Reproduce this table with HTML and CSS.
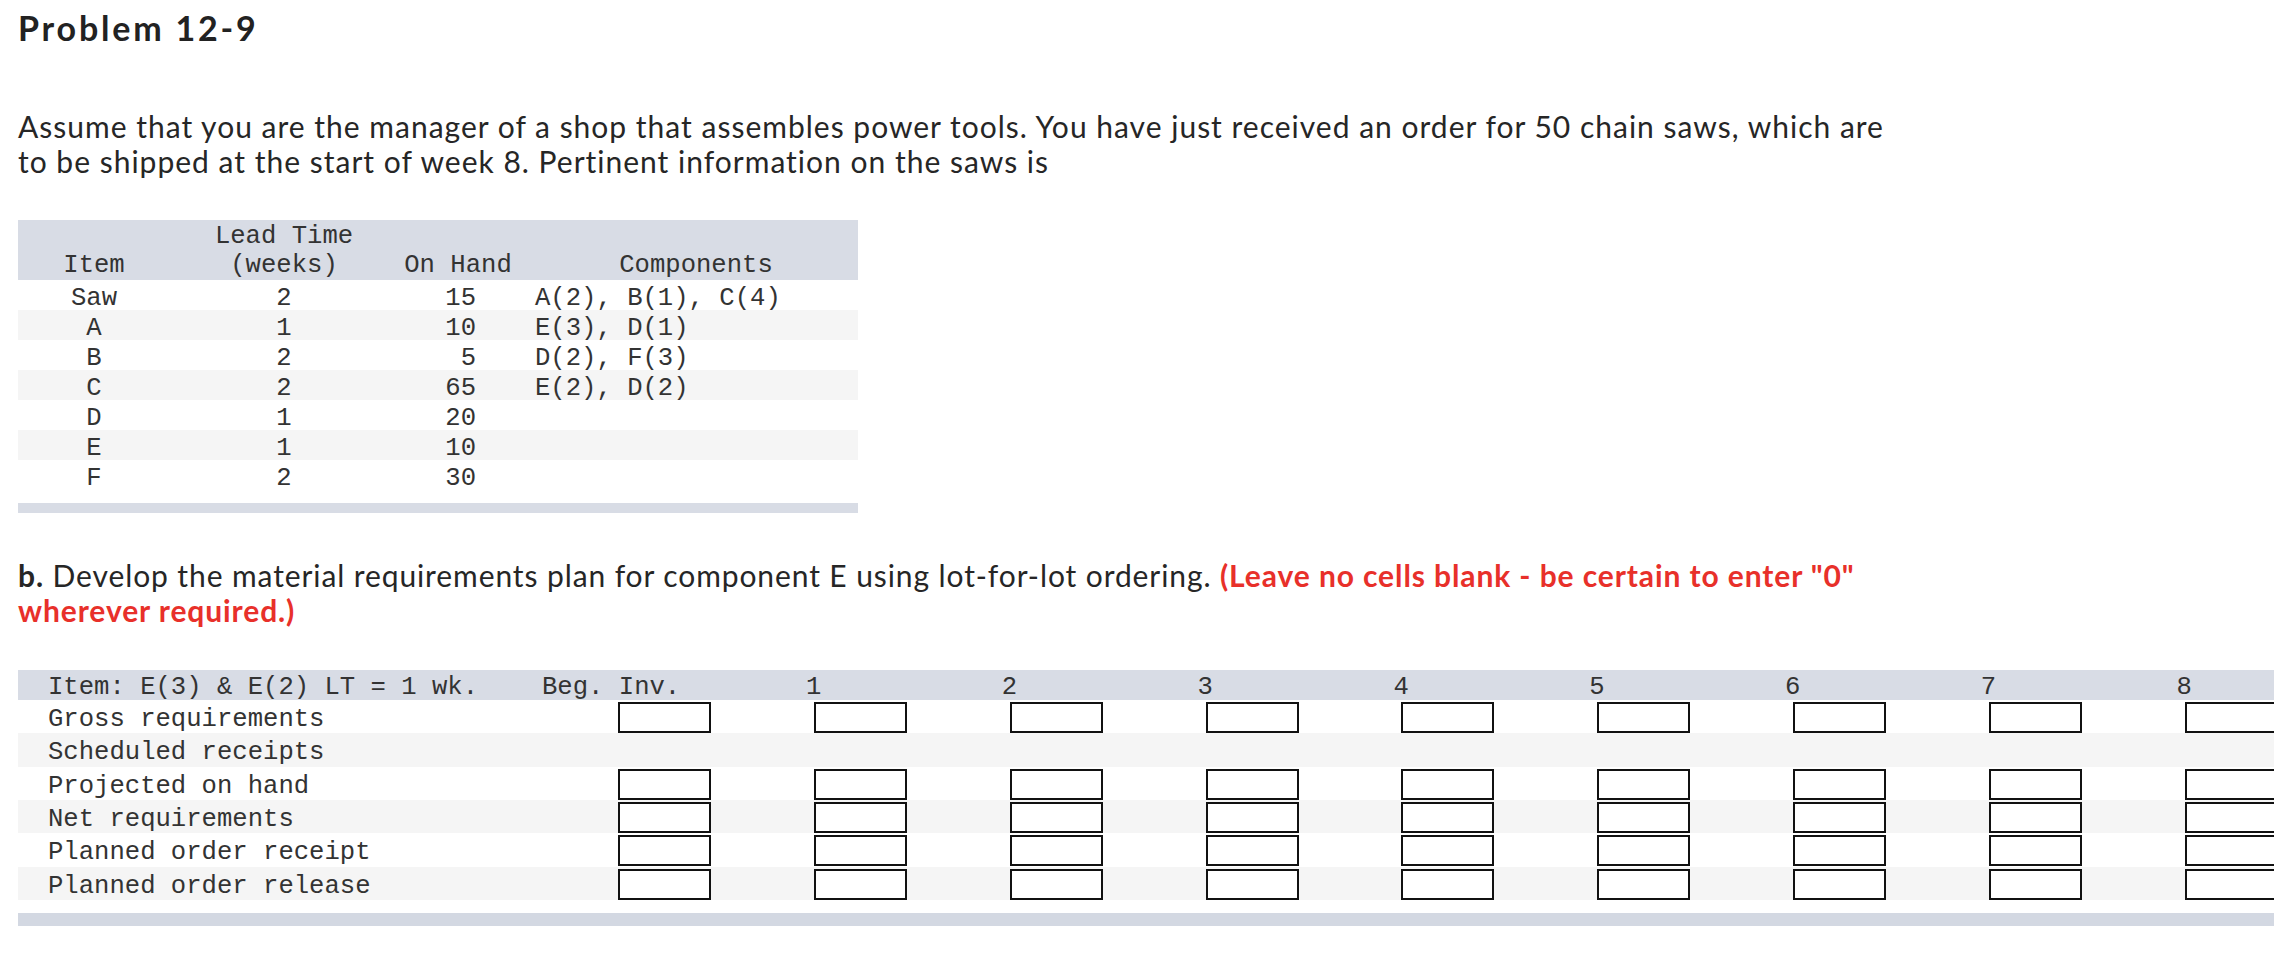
FILE: index.html
```html
<!DOCTYPE html>
<html lang="en">
<head>
<meta charset="utf-8">
<title>Problem 12-9</title>
<link rel="stylesheet" href="styles.css">
</head>
<body>
<div class="page">
  <h1 class="title">Problem 12-9</h1>
  <p class="intro">Assume that you are the manager of a shop that assembles power tools. You have just received an order for 50 chain saws, which are<br>to be shipped at the start of week 8. Pertinent information on the saws is</p>

  <div class="bom">
    <table class="bom-table">
      <colgroup>
        <col class="c-item"><col class="c-lead"><col class="c-hand"><col class="c-comp">
      </colgroup>
      <thead>
        <tr>
          <th class="mid">Item</th>
          <th class="mid">Lead Time<br>(weeks)</th>
          <th class="mid">On Hand</th>
          <th class="mid comp-h">Components</th>
        </tr>
      </thead>
      <tbody>
        <tr><td class="mid">Saw</td><td class="mid">2</td><td class="num">15</td><td class="comp">A(2), B(1), C(4)</td></tr>
        <tr class="alt"><td class="mid">A</td><td class="mid">1</td><td class="num">10</td><td class="comp">E(3), D(1)</td></tr>
        <tr><td class="mid">B</td><td class="mid">2</td><td class="num">5</td><td class="comp">D(2), F(3)</td></tr>
        <tr class="alt"><td class="mid">C</td><td class="mid">2</td><td class="num">65</td><td class="comp">E(2), D(2)</td></tr>
        <tr><td class="mid">D</td><td class="mid">1</td><td class="num">20</td><td class="comp"></td></tr>
        <tr class="alt"><td class="mid">E</td><td class="mid">1</td><td class="num">10</td><td class="comp"></td></tr>
        <tr><td class="mid">F</td><td class="mid">2</td><td class="num">30</td><td class="comp"></td></tr>
      </tbody>
    </table>
    <div class="bar"></div>
  </div>

  <p class="task"><b>b.</b> Develop the material requirements plan for component E using lot-for-lot ordering. <strong class="warn">(Leave no cells blank - be certain to enter "0"<br>wherever required.)</strong></p>

  <div class="mrp">
    <div class="mrp-row mrp-head">
      <div class="lbl">Item: E(3) &amp; E(2) LT = 1 wk.</div>
      <div class="beg-h">Beg. Inv.</div>
      <div class="wk">1</div><div class="wk">2</div><div class="wk">3</div><div class="wk">4</div>
      <div class="wk">5</div><div class="wk">6</div><div class="wk">7</div><div class="wk">8</div>
    </div>
    <div class="mrp-row">
      <div class="lbl">Gross requirements</div>
      <div class="cell beg"><span class="box"></span></div>
      <div class="cell"><span class="box"></span></div><div class="cell"><span class="box"></span></div>
      <div class="cell"><span class="box"></span></div><div class="cell"><span class="box"></span></div>
      <div class="cell"><span class="box"></span></div><div class="cell"><span class="box"></span></div>
      <div class="cell"><span class="box"></span></div><div class="cell"><span class="box"></span></div>
    </div>
    <div class="mrp-row alt">
      <div class="lbl">Scheduled receipts</div>
    </div>
    <div class="mrp-row">
      <div class="lbl">Projected on hand</div>
      <div class="cell beg"><span class="box"></span></div>
      <div class="cell"><span class="box"></span></div><div class="cell"><span class="box"></span></div>
      <div class="cell"><span class="box"></span></div><div class="cell"><span class="box"></span></div>
      <div class="cell"><span class="box"></span></div><div class="cell"><span class="box"></span></div>
      <div class="cell"><span class="box"></span></div><div class="cell"><span class="box"></span></div>
    </div>
    <div class="mrp-row alt">
      <div class="lbl">Net requirements</div>
      <div class="cell beg"><span class="box"></span></div>
      <div class="cell"><span class="box"></span></div><div class="cell"><span class="box"></span></div>
      <div class="cell"><span class="box"></span></div><div class="cell"><span class="box"></span></div>
      <div class="cell"><span class="box"></span></div><div class="cell"><span class="box"></span></div>
      <div class="cell"><span class="box"></span></div><div class="cell"><span class="box"></span></div>
    </div>
    <div class="mrp-row">
      <div class="lbl">Planned order receipt</div>
      <div class="cell beg"><span class="box"></span></div>
      <div class="cell"><span class="box"></span></div><div class="cell"><span class="box"></span></div>
      <div class="cell"><span class="box"></span></div><div class="cell"><span class="box"></span></div>
      <div class="cell"><span class="box"></span></div><div class="cell"><span class="box"></span></div>
      <div class="cell"><span class="box"></span></div><div class="cell"><span class="box"></span></div>
    </div>
    <div class="mrp-row alt">
      <div class="lbl">Planned order release</div>
      <div class="cell beg"><span class="box"></span></div>
      <div class="cell"><span class="box"></span></div><div class="cell"><span class="box"></span></div>
      <div class="cell"><span class="box"></span></div><div class="cell"><span class="box"></span></div>
      <div class="cell"><span class="box"></span></div><div class="cell"><span class="box"></span></div>
      <div class="cell"><span class="box"></span></div><div class="cell"><span class="box"></span></div>
    </div>
    <div class="bar mrp-bar"></div>
  </div>
</div>
</body>
</html>
```
FILE: styles.css
```css
html, body {
  background: #ffffff;
}

body {
  margin: 8px;
  font-family: Lato, "Liberation Sans", Arial, sans-serif;
  color: #222222;
}

.page {
  padding-left: 10px;
}

.title {
  margin: 0;
  font-size: 34px;
  font-weight: 700;
  line-height: 40px;
  letter-spacing: 2.8px;
  color: #222222;
}

.intro {
  margin: 61px 0 0;
  font-size: 30px;
  line-height: 35px;
  letter-spacing: 1px;
  color: #262626;
}

/* ---------- bill of materials table ---------- */
.bom {
  width: 840px;
  margin-top: 41px;
}

.bom-table {
  width: 840px;
  border-collapse: collapse;
  table-layout: fixed;
  font-family: "Liberation Mono", "Courier New", monospace;
  font-size: 25.6px;
  color: #333333;
}

.c-item { width: 152px; }
.c-lead { width: 228px; }
.c-hand { width: 120px; }
.c-comp { width: 340px; }

.bom-table th,
.bom-table td {
  padding: 0;
  font-weight: 400;
  white-space: pre;
}

.bom-table th {
  padding-top: 3px;
  height: 57px;
  line-height: 28.5px;
  vertical-align: bottom;
}

.bom-table thead tr {
  background: #d8dce5;
}

.bom-table td {
  padding-top: 9px;
  padding-bottom: 1px;
  height: 20px;
  line-height: 20px;
  vertical-align: top;
}

.bom-table .alt {
  background: #f5f5f5;
}

.mid { text-align: center; }

.bom-table .num {
  text-align: right;
  padding-right: 42px;
}

.bom-table .comp {
  text-align: left;
  padding-left: 17px;
}

.bom-table .comp-h {
  padding-left: 16px;
}

.bar {
  height: 10px;
  background: #d8dce5;
  margin-top: 13px;
}

/* ---------- task text ---------- */
.task {
  margin: 45px 0 0;
  font-size: 30px;
  line-height: 35px;
  letter-spacing: 0.9px;
  color: #262626;
}

.task b {
  font-weight: 700;
}

.warn {
  font-weight: 700;
  color: #e8302a;
}

/* ---------- MRP table ---------- */
.mrp {
  margin-top: 42px;
  overflow: hidden;
  font-family: "Liberation Mono", "Courier New", monospace;
  font-size: 25.6px;
  color: #333333;
}

.mrp-row {
  display: grid;
  grid-template-columns: 525px 263px repeat(8, 195.8px);
  width: max-content;
  min-width: 100%;
  height: 33.33px;
  white-space: pre;
}

.mrp-row.alt {
  background: #f5f5f5;
}

.mrp-head {
  height: 30px;
  background: #d8dce5;
}

.lbl,
.wk,
.beg-h {
  padding-top: 6px;
  line-height: 27.33px;
}

.mrp-head .lbl,
.mrp-head .wk,
.mrp-head .beg-h {
  padding-top: 6px;
  line-height: 24px;
}

.lbl {
  padding-left: 30px;
}

.beg-h {
  margin-left: -1px;
}

.cell {
  padding-left: 8px;
}

.cell.beg {
  padding-left: 75px;
}

.box {
  display: block;
  box-sizing: border-box;
  width: 93px;
  height: 31px;
  margin-top: 2px;
  border: 2px solid #111111;
  background: #ffffff;
}

.mrp-bar {
  margin-top: 13px;
  height: 13px;
  background: #d3d8e2;
}
```
